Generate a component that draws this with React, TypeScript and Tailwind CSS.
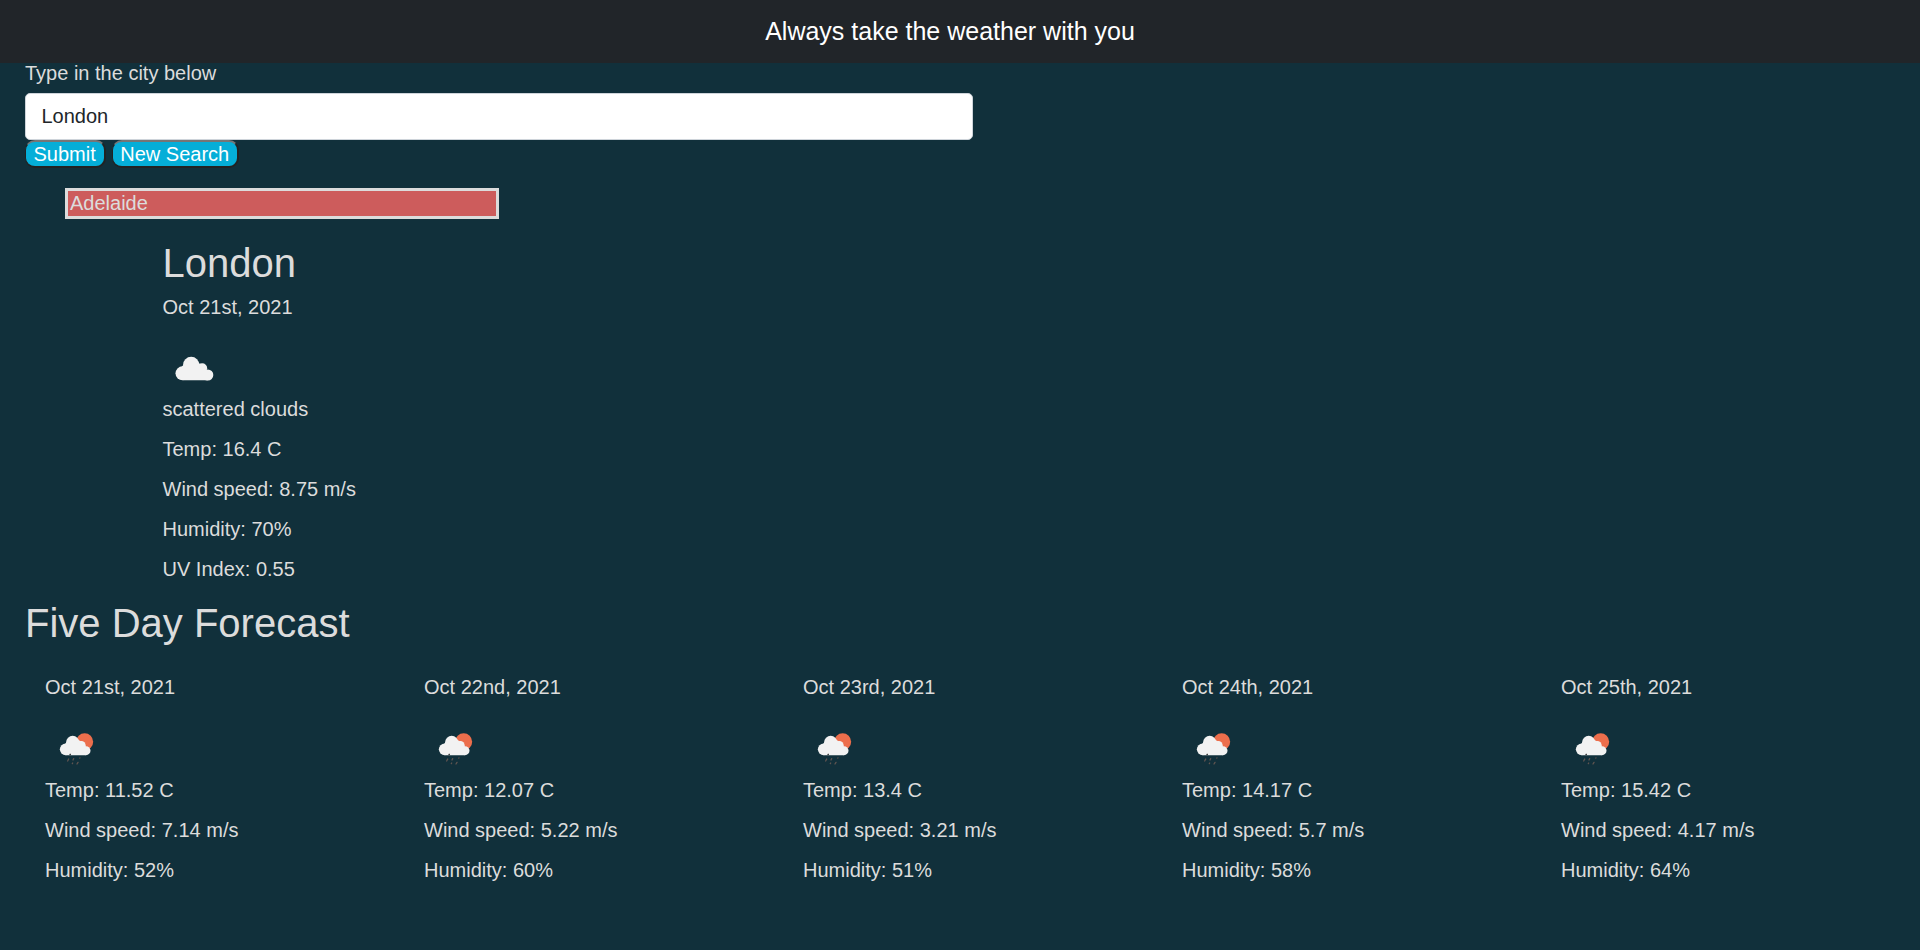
import React from "react";

const forecast = [
  { date: "Oct 21st, 2021", temp: "11.52", wind: "7.14", humidity: 52 },
  { date: "Oct 22nd, 2021", temp: "12.07", wind: "5.22", humidity: 60 },
  { date: "Oct 23rd, 2021", temp: "13.4", wind: "3.21", humidity: 51 },
  { date: "Oct 24th, 2021", temp: "14.17", wind: "5.7", humidity: 58 },
  { date: "Oct 25th, 2021", temp: "15.42", wind: "4.17", humidity: 64 },
];

function CloudIcon() {
  return (
    <svg className="block size-[63px]" viewBox="37.5 -30 189 189" fill="#f2f2f2">
      <circle cx="96" cy="100" r="21" />
      <circle cx="122" cy="75" r="24.5" />
      <circle cx="155" cy="85" r="15" />
      <circle cx="172" cy="105" r="16.5" />
      <path d="M94 79 L100 75 L123 60 L150 72 L165 86 L172 100 V121 H97 Z" />
    </svg>
  );
}

function RainIcon() {
  return (
    <svg className="block size-[62px]" viewBox="45 0 186 186">
      <circle cx="164" cy="95" r="25.5" fill="#ec6e4c" />
      <g fill="#f2f2f2">
        <circle cx="107" cy="118" r="17.5" />
        <circle cx="128" cy="97" r="19.5" />
        <circle cx="154" cy="106" r="13" />
        <circle cx="168" cy="122" r="13.5" />
        <path d="M106 101 L110 95 L128 80 L155 95 L168 110 V135.5 H107 Z" />
      </g>
      <g stroke="#5f5450" strokeWidth="4" strokeLinecap="round">
        <path d="M121 133 l-1 1" stroke="#303030" />
        <path d="M116 147 l-3 6" />
        <path d="M131 146 l-2 4" />
        <path d="M128 159 l-1 2" />
        <path d="M144 157 l-3 5" />
        <path d="M150 143 l-1 2" stroke="#454545" />
      </g>
    </svg>
  );
}

const button =
  "h-[28px] rounded-[10px] border-2 border-l border-t-[#767676] border-l-[#222222] border-r-[#222222] border-b-[#222222] bg-[#05aed8] pl-[7.5px] leading-[23px] text-white";

export default function App() {
  return (
    <div className="h-[950px] overflow-hidden bg-[#11303b] font-['Liberation_Sans',Arial,sans-serif] text-[20px] leading-[30px] text-[#dcdcdc]">
      <header className="flex h-[63px] justify-center bg-[#212529] pr-[20px] pt-[12px] text-[25px] leading-[38px] text-white">
        <h1>Always take the weather with you</h1>
      </header>
      <main className="px-[25px]">
        <label htmlFor="city" className="-mt-[5px] block">Type in the city below</label>
        <input
          id="city"
          defaultValue="London"
          className="mt-[5px] block h-[47px] w-[948px] rounded-[5px] border border-[#ced4da] bg-white px-[15.5px] text-[#212529] outline-none"
        />
        <div className="flex gap-[6px]">
          <button className={`${button} pr-[8px]`}>Submit</button>
          <button className={`${button} pr-[7.5px]`}>New Search</button>
        </div>
        <div className="ml-[40px] mt-[20px] h-[31px] w-[434px] border-3 border-[#dcdcdc] bg-[#cd5c5c] px-[2px] leading-[25px]">
          Adelaide
        </div>
        <section className="ml-[137.5px] mt-[20px]">
          <h2 className="text-[40px] leading-[48px]">London</h2>
          <p className="mt-[5px]">Oct 21st, 2021</p>
          <div className="mb-px mt-[8px]"><CloudIcon /></div>
          <div className="flex flex-col gap-[10px]">
            <p>scattered clouds</p>
            <p>Temp: 16.4 C</p>
            <p>Wind speed: 8.75 m/s</p>
            <p>Humidity: 70%</p>
            <p>UV Index: 0.55</p>
          </div>
        </section>
        <h2 className="mt-[15px] text-[40px] leading-[48px]">Five Day Forecast</h2>
        <section className="ml-[20px] mt-[25px] grid grid-cols-[repeat(5,379px)]">
          {forecast.map((day) => (
            <article key={day.date}>
              <p>{day.date}</p>
              <div className="mb-[3px] mt-[8px]"><RainIcon /></div>
              <div className="flex flex-col gap-[10px]">
                <p>Temp: {day.temp} C</p>
                <p>Wind speed: {day.wind} m/s</p>
                <p>Humidity: {day.humidity}%</p>
              </div>
            </article>
          ))}
        </section>
      </main>
    </div>
  );
}
